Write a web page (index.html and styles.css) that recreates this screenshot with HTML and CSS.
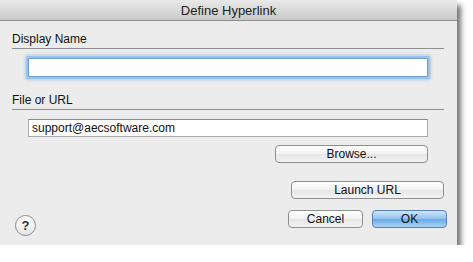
FILE: index.html
```html
<!DOCTYPE html>
<html lang="en">
<head>
  <meta charset="UTF-8" />
  <title>Define Hyperlink</title>
  <link rel="stylesheet" href="styles.css">
</head>
<body>
  <div class="dialog">
    <div class="titlebar">Define Hyperlink</div>

    <div class="content">
      <div class="section">
        <div class="label">Display Name</div>
        <input type="text" class="field focused" value="">
      </div>

      <div class="section">
        <div class="label">File or URL</div>
        <input type="text" class="field" value="support@aecsoftware.com">
      </div>

      <div class="row browse-row">
        <button class="btn wide">Browse...</button>
      </div>

      <div class="row launch-row">
        <button class="btn wide">Launch URL</button>
      </div>

      <div class="row bottom-row">
        <div class="help">?</div>
        <div class="actions">
          <button class="btn small">Cancel</button>
          <button class="btn small primary">OK</button>
        </div>
      </div>
    </div>
  </div>
</body>
</html>
```

FILE: styles.css
```css
body {
  margin: 0;
  background: #ffffff;
  font-family: "Liberation Sans", Arial, sans-serif;
  font-size: 12px;
  color: #111;
}

.dialog {
  width: 457px;
  height: 245px;
  background: #ececec;
  box-shadow: 4px 5px 5px rgba(0, 0, 0, 0.55);
  display: flex;
  flex-direction: column;
}

.titlebar {
  height: 20px;
  line-height: 21px;
  text-align: center;
  font-size: 13px;
  color: #222;
  background: linear-gradient(#e9e9e9, #c9c9c9);
  border-bottom: 1px solid #8c8c8c;
}

.content {
  flex: 1;
  padding: 11px 13px 0 12px;
  display: flex;
  flex-direction: column;
}

.section {
  display: flex;
  flex-direction: column;
}

.label {
  line-height: 14px;
  padding-bottom: 2px;
  border-bottom: 1px solid #8e8e8e;
  margin-bottom: 9px;
}

.section + .section {
  margin-top: 16px;
}

.field {
  margin-left: 16px;
  width: 400px;
  height: 18px;
  box-sizing: border-box;
  border: 1px solid #a9a9a9;
  border-top-color: #8a8a8a;
  background: #fff;
  font-family: inherit;
  font-size: 12px;
  padding: 0 3px;
  color: #111;
  outline: none;
}

.field.focused {
  height: 19px;
  border: 1px solid #6d9fd3;
  box-shadow: 0 0 0 2px #9cc2ea, 0 0 3px 3px rgba(120, 170, 225, 0.5);
  border-radius: 1px;
}

.row {
  display: flex;
}

.browse-row {
  margin-top: 8px;
  padding-left: 263px;
}

.launch-row {
  margin-top: 18px;
  padding-left: 279px;
}

.bottom-row {
  margin-top: 11px;
  justify-content: space-between;
  align-items: flex-end;
}

.btn {
  height: 18px;
  box-sizing: border-box;
  border: 1px solid #8f8f8f;
  border-radius: 4px;
  background: linear-gradient(#ffffff, #f1f1f1 50%, #e6e6e6 51%, #f4f4f4);
  font-family: inherit;
  font-size: 12px;
  color: #111;
  padding: 0;
}

.btn.wide {
  width: 153px;
}

.btn.small {
  width: 75px;
}

.btn.primary {
  border-color: #5a7fb5;
  background: linear-gradient(#cfe6fb, #8fc1ef 50%, #6aaae6 51%, #a8d4f8);
}

.actions {
  display: flex;
  gap: 9px;
  margin-right: -3px;
}

.help {
  width: 19px;
  height: 19px;
  margin-left: 3px;
  margin-bottom: -8px;
  border: 1px solid #8a8a8a;
  border-radius: 50%;
  background: linear-gradient(#ffffff, #e6e6e6);
  text-align: center;
  line-height: 19px;
  font-weight: bold;
  font-size: 13px;
  color: #333;
}
```
